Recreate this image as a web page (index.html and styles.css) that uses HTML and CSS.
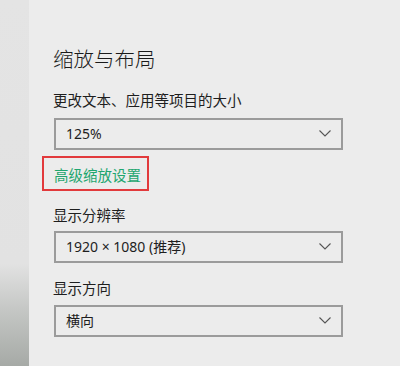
FILE: index.html
```html
<!DOCTYPE html>
<html lang="zh-CN">
<head>
<meta charset="utf-8">
<link rel="stylesheet" href="styles.css">
</head>
<body>
<div class="page">
  <div class="sidebar"></div>
  <div class="main">
    <div class="title">缩放与布局</div>
    <div class="label label-first">更改文本、应用等项目的大小</div>
    <div class="select select-first">
      <span class="value">125%</span>
      <svg class="chev" width="12" height="7" viewBox="0 0 12 7"><polyline points="0.5,0.5 6,6 11.5,0.5" fill="none" stroke="#555" stroke-width="1.1"/></svg>
    </div>
    <div class="link-row"><span class="link">高级缩放设置</span></div>
    <div class="label label-second">显示分辨率</div>
    <div class="select">
      <span class="value">1920 × 1080 (推荐)</span>
      <svg class="chev" width="12" height="7" viewBox="0 0 12 7"><polyline points="0.5,0.5 6,6 11.5,0.5" fill="none" stroke="#555" stroke-width="1.1"/></svg>
    </div>
    <div class="label label-third">显示方向</div>
    <div class="select select-last">
      <span class="value">横向</span>
      <svg class="chev" width="12" height="7" viewBox="0 0 12 7"><polyline points="0.5,0.5 6,6 11.5,0.5" fill="none" stroke="#555" stroke-width="1.1"/></svg>
    </div>
  </div>
</div>
</body>
</html>
```
FILE: styles.css
```css
html, body {
  margin: 0;
  padding: 0;
}
body {
  width: 400px;
  height: 366px;
  overflow: hidden;
  font-family: "Noto Sans CJK SC", "Noto Sans", sans-serif;
  color: #1e1e1e;
}
.page {
  display: flex;
  height: 366px;
}
.sidebar {
  width: 29px;
  flex: none;
  background: linear-gradient(to bottom, #e4e4e4 0%, #e2e2e2 72%, #c4c6c4 85%, #a6aaa6 100%);
}
.main {
  flex: 1;
  background: #ececec;
  padding: 44px 0 0 24px;
  display: flex;
  flex-direction: column;
  align-items: flex-start;
}
.title {
  font-size: 20.5px;
  font-weight: 300;
  line-height: 28px;
  height: 28px;
  color: #1a1a1a;
}
.label {
  font-size: 14.5px;
  line-height: 20px;
  height: 20px;
}
.label-first { margin-top: 18px; }
.label-second { margin-top: 14px; }
.label-third { margin-top: 15px; }
.select {
  box-sizing: border-box;
  width: 289px;
  height: 32px;
  margin-left: 1px;
  margin-top: 6px;
  border: 2px solid #9b9b9b;
  background: #ececec;
  display: flex;
  align-items: center;
  justify-content: space-between;
  padding: 0 10px 0 10px;
}
.select-first { margin-top: 8px; }
.select-last { margin-top: 7px; }
.value {
  font-family: "Noto Sans", "Noto Sans CJK SC", sans-serif;
  font-size: 14px;
  line-height: 20px;
}
.chev {
  display: block;
  margin-top: -1px;
}
.link-row {
  margin-top: 6px;
  margin-left: -11px;
}
.link {
  display: inline-block;
  box-sizing: border-box;
  height: 35px;
  border: 2px solid #e23a3c;
  padding: 7px 6px 4px 10px;
  font-size: 14.5px;
  line-height: 20px;
  color: #1fa66f;
}
```
